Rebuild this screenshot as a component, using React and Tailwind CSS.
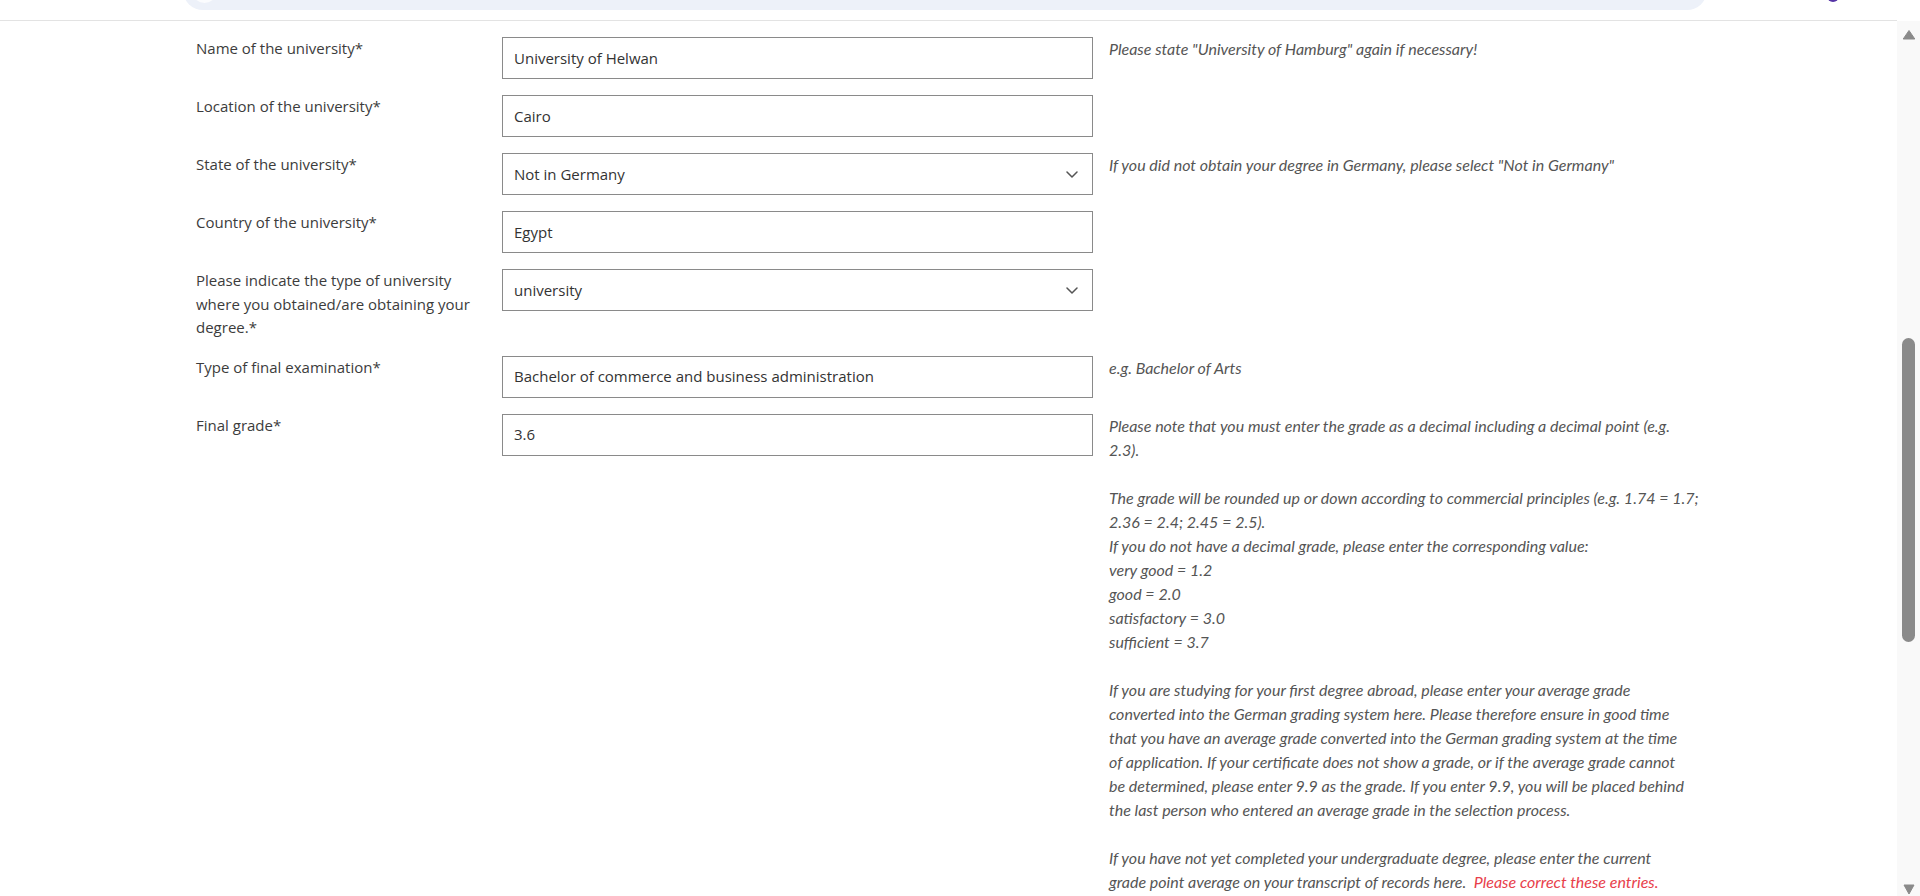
import React from "react";

const Chevron = () => (
  <svg width="12" height="7" viewBox="0 0 12 7" fill="none">
    <path d="M1 1l5 5 5-5" stroke="#555" strokeWidth="1.5" strokeLinecap="round" strokeLinejoin="round" />
  </svg>
);

const Field = ({ value, select }) => (
  <div className="h-[42px] w-full border border-[#8a8a8a] bg-white pl-[11px] pr-[14px] flex items-center justify-between text-[15px] text-[#333]">
    <span>{value}</span>
    {select && <Chevron />}
  </div>
);

const Lines = ({ lines }) =>
  lines.map((line, i) => (
    <React.Fragment key={i}>
      {line === "" ? "\u00a0" : line}
      {i < lines.length - 1 && <br />}
    </React.Fragment>
  ));

const gradeHint = [
  "Please note that you must enter the grade as a decimal including a decimal point (e.g.",
  "2.3).",
  "",
  "The grade will be rounded up or down according to commercial principles (e.g. 1.74 = 1.7;",
  "2.36 = 2.4; 2.45 = 2.5).",
  "If you do not have a decimal grade, please enter the corresponding value:",
  "very good = 1.2",
  "good = 2.0",
  "satisfactory = 3.0",
  "sufficient = 3.7",
  "",
  "If you are studying for your first degree abroad, please enter your average grade",
  "converted into the German grading system here. Please therefore ensure in good time",
  "that you have an average grade converted into the German grading system at the time",
  "of application. If your certificate does not show a grade, or if the average grade cannot",
  "be determined, please enter 9.9 as the grade. If you enter 9.9, you will be placed behind",
  "the last person who entered an average grade in the selection process.",
  "",
  "If you have not yet completed your undergraduate degree, please enter the current",
];

const rows = [
  {
    label: ["Name of the university*"],
    value: "University of Helwan",
    hint: ['Please state "University of Hamburg" again if necessary!'],
  },
  { label: ["Location of the university*"], value: "Cairo" },
  {
    label: ["State of the university*"],
    value: "Not in Germany",
    select: true,
    hint: ['If you did not obtain your degree in Germany, please select "Not in Germany"'],
  },
  { label: ["Country of the university*"], value: "Egypt" },
  {
    label: [
      "Please indicate the type of university",
      "where you obtained/are obtaining your",
      "degree.*",
    ],
    value: "university",
    select: true,
  },
  {
    label: ["Type of final examination*"],
    value: "Bachelor of commerce and business administration",
    hint: ["e.g. Bachelor of Arts"],
  },
];

const Scrollbar = () => (
  <div className="w-[23px] shrink-0 bg-[#f9f9f9] flex flex-col items-center pt-[8px] pb-[1px]">
    <svg width="14" height="11" viewBox="0 0 14 11">
      <path d="M7 1.5L12.8 10H1.2z" fill="#8a8a8a" stroke="#8a8a8a" strokeLinejoin="round" />
    </svg>
    <div className="mt-[298px] h-[304px] w-[13px] rounded-full bg-[#8a8a8a]" />
    <svg className="mt-auto" width="12" height="12" viewBox="0 0 12 12">
      <path d="M6 11L11 2H1z" fill="#8a8a8a" stroke="#8a8a8a" strokeLinejoin="round" />
    </svg>
  </div>
);

const labelCls = "text-[15px] leading-[23.5px] text-[#3c3c3c] whitespace-nowrap";
const hintCls = "font-['Lato',sans-serif] italic text-[16px] leading-6 text-[#555] whitespace-nowrap";

export default function App() {
  return (
    <div className="h-[896px] w-full overflow-hidden bg-white flex flex-col font-['Open_Sans',sans-serif]">
      <header className="flex h-[21px] shrink-0">
        <div className="flex-1 flex items-start border-b border-[#e3e3e3] pl-[183px]">
          <div className="-mt-[30px] h-[40px] w-[1524px] rounded-full bg-[#edf1f9] flex items-center pl-[9px]">
            <div className="h-[25px] w-[25px] rounded-full bg-[#fbfcfe]" />
          </div>
          <div className="ml-[120px] -mt-[10px] h-[12px] w-[12px] rounded-full bg-[#5534a5]" />
        </div>
        <div className="w-[23px]" />
      </header>

      <div className="flex flex-1 min-h-0">
        <main className="flex-1 min-w-0 pl-[196px] pt-[16px]">
          <div className="grid w-[1498px] grid-cols-[290px_591px_1fr] gap-x-4 gap-y-4 items-start">
            {rows.map((row, i) => (
              <React.Fragment key={i}>
                <div className={labelCls}>
                  <Lines lines={row.label} />
                </div>
                <Field value={row.value} select={row.select} />
                <div className={hintCls}>{row.hint ? <Lines lines={row.hint} /> : null}</div>
              </React.Fragment>
            ))}

            <div className={labelCls}>Final grade*</div>
            <Field value="3.6" />
            <div className={hintCls}>
              <Lines lines={gradeHint} />
              <br />
              grade point average on your transcript of records here.{"\u00a0\u00a0"}
              <span className="text-[#e8404b]">Please correct these entries.</span>
            </div>
          </div>
        </main>
        <Scrollbar />
      </div>
    </div>
  );
}
